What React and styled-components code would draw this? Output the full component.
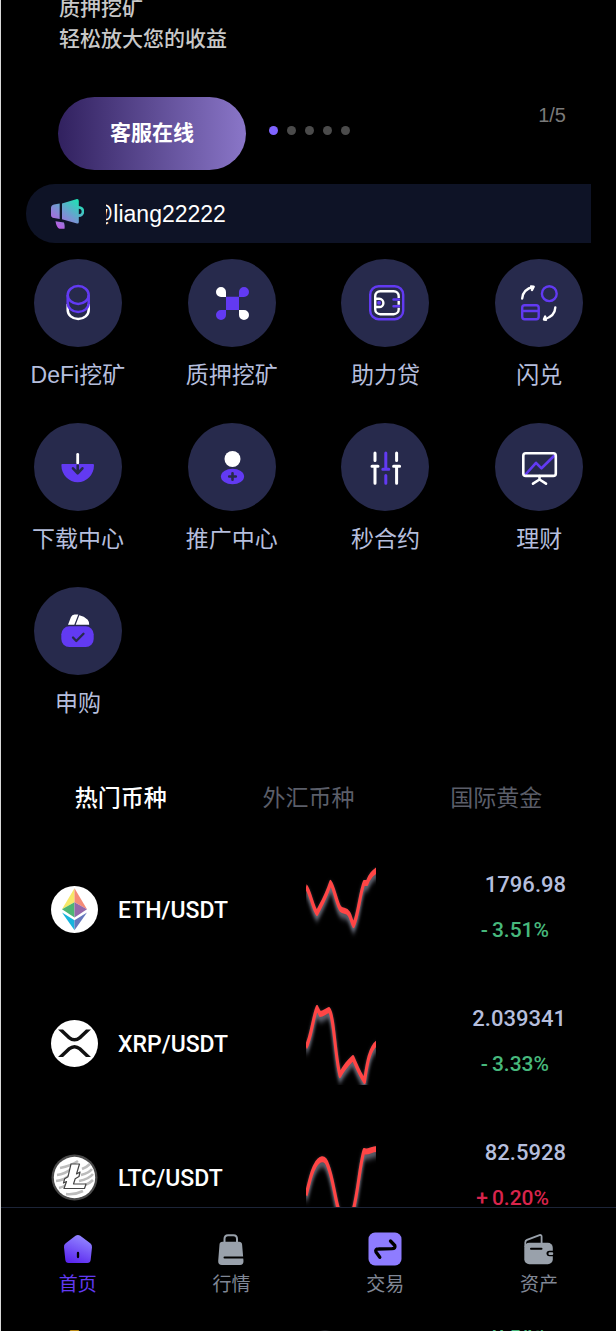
import React, { useState } from 'react';

import styled, { createGlobalStyle } from 'styled-components';


const TM = {
  bg: '#000000',
  edge: '#d9d9d9',
  bar: '#0e1326',
  disc: '#272a4c',
  accent: '#623af2',
  label: '#b5bedd',
  muted: '#5b5e69',
  nav: '#808795',
  navIcon: '#99a1ab',
  navLine: '#1c2438',
  up: '#d9244c',
  down: '#47b87c',
};

const SANS = '"Liberation Sans", "Noto Sans CJK SC", sans-serif';
const DIGITS = 'Roboto, "Noto Sans CJK SC", sans-serif';

const GlobalStyle = createGlobalStyle`
  * { box-sizing: border-box; }
  html, body { margin: 0; background: ${TM.bg}; }
  body { font-family: ${SANS}; color: #fff; overflow-x: hidden; }
  button { border: 0; padding: 0; background: none; font-family: inherit; cursor: pointer; }
  a { color: inherit; text-decoration: none; }
  svg { display: block; }
  ul { list-style: none; margin: 0; padding: 0; }
`;


///////////////////////////////////////////////////////////////////////////////////////////////////
// Page

const Page = styled.div`
  border-left: 1px solid ${TM.edge};
  height: 100vh;
  overflow: hidden;
`;

///////////////////////////////////////////////////////////////////////////////////////////////////
// Banner

const BannerText = styled.div`
  height: 54px;
  padding-left: 58px;
  display: flex;
  flex-direction: column;
  justify-content: flex-end;
  overflow: hidden;
  font-size: 21px;
  line-height: 31px;
  font-weight: 500;
  color: #c8c8c8;

  p { margin: 0; flex: none; }
`;

const BannerFoot = styled.div`
  display: flex;
  align-items: center;
  margin-top: 43px;
  padding: 0 50px 0 57px;
`;

const ServiceButton = styled.button`
  width: 188px;
  height: 73px;
  padding-bottom: 6px;
  border-radius: 37px;
  background: linear-gradient(90deg, #31215f, #8a76c8);
  color: #fff;
  font-size: 21px;
  font-weight: 700;
`;

const Dots = styled.div`
  display: flex;
  gap: 9px;
  margin-left: 23px;
  padding-bottom: 7px;
`;

const Dot = styled.button`
  width: 9px;
  height: 9px;
  border-radius: 50%;
  background: ${({ $on }) => $on ? '#7f63ff' : '#4b4b4b'};
`;

const Counter = styled.span`
  margin-left: auto;
  padding-bottom: 37px;
  font-size: 20px;
  line-height: 24px;
  color: #7a7a7a;
`;

///////////////////////////////////////////////////////////////////////////////////////////////////
// Notice

const NoticeBar = styled.div`
  display: flex;
  align-items: center;
  height: 59px;
  margin: 14px 25px 0;
  background: ${TM.bar};
  border-radius: 29px 0 0 29px;
  padding-left: 24px;
`;

const NoticeWindow = styled.div`
  flex: 1;
  margin-left: 22px;
  overflow: hidden;
  white-space: nowrap;
  font-size: 23px;
  line-height: 30px;
`;

const NoticeText = styled.span`
  display: inline-block;
  margin-left: -16px;
`;

///////////////////////////////////////////////////////////////////////////////////////////////////
// Services

const ServiceGrid = styled.div`
  display: grid;
  grid-template-columns: repeat(4, 1fr);
  row-gap: 34px;
  margin-top: 16px;
`;

const ServiceItem = styled.a`
  display: flex;
  flex-direction: column;
  align-items: center;
  gap: 14px;
  font-size: 23px;
  line-height: 28px;
  color: ${TM.label};
`;

const Disc = styled.span`
  width: 88px;
  height: 88px;
  border-radius: 50%;
  background: ${TM.disc};
`;

///////////////////////////////////////////////////////////////////////////////////////////////////
// Market

const Tabs = styled.div`
  display: flex;
  margin: 66px 26px 29px;
`;

const Tab = styled.button`
  flex: 1;
  font-size: 23px;
  line-height: 30px;
  font-weight: ${({ $on }) => $on ? 500 : 400};
  color: ${({ $on }) => $on ? '#fff' : TM.muted};
`;

const CoinRow = styled.a`
  display: grid;
  grid-template-columns: 1fr 70px 190px;
  align-items: center;
  height: 134px;
  padding: 0 50px;
  font-family: ${DIGITS};
  font-size: 22px;
  line-height: 30px;
  font-weight: 500;
`;

const Pair = styled.div`
  display: flex;
  align-items: center;
  gap: 20px;
  font-size: 23px;

  span { padding-top: 3px; }
`;

const Quote = styled.div`
  display: flex;
  flex-direction: column;
  align-items: flex-end;
  gap: 15px;
  padding-bottom: 4px;
  color: ${TM.label};
`;

const Price = styled.span`
  height: 30px;
`;

const Change = styled.span`
  display: flex;
  gap: 4px;
  margin-right: 17px;
  font-size: 21px;
  color: ${({ $up }) => $up ? TM.up : TM.down};
`;

const Spark = styled.svg`
  overflow: hidden;

  path {
    fill: none;
    stroke: #ff4545;
    stroke-width: 6;
    stroke-linejoin: round;
    filter: drop-shadow(0 4px 3px #858a9c);
  }
`;

///////////////////////////////////////////////////////////////////////////////////////////////////
// Bottom navigation, floats over the list

const NavBar = styled.nav`
  position: fixed;
  left: 1px;
  right: 0;
  bottom: 1px;
  height: 123px;
  display: grid;
  grid-template-columns: repeat(4, 1fr);
  background: ${TM.bg};
  border-top: 1px solid ${TM.navLine};
`;

const NavItem = styled.a`
  display: flex;
  flex-direction: column;
  align-items: center;
  gap: 6px;
  padding-top: 24px;
  font-size: 19px;
  line-height: 26px;
  color: ${({ $on }) => $on ? TM.accent : TM.nav};
`;


///////////////////////////////////////////////////////////////////////////////////////////////////
// Icons

const Megaphone = () => (
  <svg width="34" height="32" viewBox="0 0 34 32">
    <defs>
      <linearGradient id="horn" x1="1" y1="0" x2="0.1" y2="1">
        <stop offset="0.1" stopColor="#1be6b4" />
        <stop offset="0.5" stopColor="#6c9fd0" />
        <stop offset="1" stopColor="#c750e6" />
      </linearGradient>
    </defs>
    <g fill="url(#horn)">
      <path d="M1 10Q1 7 4 6.5L9.7 5.5V21L4 20Q1 19.500 1 17ZM12 5.400L27 1.100Q28.800 1 28.800 3V24Q28.800 26 27 25.500L12 21.300ZM5.500 23.300L14 24.500Q15 28 14.500 30.700H9.500Q6.500 30 5.500 23.300ZM28.800 8A5.200 5.200 0 0 1 28.800 19V16.300A2.600 2.600 0 0 0 28.800 10.700Z" />
    </g>
  </svg>
);

const P = TM.accent;
const W = '#fff';
const D = TM.disc;

const discIcons = {
  coins: (
    <g strokeWidth="2.5">
      <path stroke={W} d="M33.700 45V51A10.500 9 0 0 0 54.700 51V45" />
      <path stroke={P} d="M33.700 36V44A10.500 9 0 0 0 54.700 44V36" />
      <ellipse stroke={P} cx="44.200" cy="36" rx="10.500" ry="8.900" />
    </g>
  ),
  pledge: (
    <g>
      <path fill={P} d="M38 37.700H51V51H38ZM51 38V33A5 5 0 1 1 56 38ZM38 51V56A5 5 0 1 1 33 51Z" />
      <path fill={W} d="M38 38H33A5 5 0 1 1 38 33ZM51 51H56A5 5 0 1 1 51 56Z" />
    </g>
  ),
  loan: (
    <g strokeWidth="2.4">
      <rect stroke={P} x="29.200" y="27.200" width="33" height="33" rx="8.500" />
      <rect stroke={W} x="34.200" y="32.200" width="23.500" height="23" rx="5" />
      <path stroke={W} d="M34.500 39.800H38.300A4.100 4.100 0 0 1 38.300 48H34.500" />
      <circle fill={P} cx="38" cy="43.800" r="2" />
      <path stroke={D} strokeWidth="3" d="M56 40.500H60M56 47.200H60" />
      <path stroke={P} strokeLinecap="round" d="M52.500 40.500H58M52.500 47.200H58" />
    </g>
  ),
  swap: (
    <g strokeWidth="2.4" strokeLinecap="round" strokeLinejoin="round">
      <circle stroke={P} cx="54.300" cy="34.700" r="7.400" />
      <rect stroke={P} x="27.200" y="46.300" width="16.500" height="14" rx="2.500" />
      <path stroke={P} d="M27.500 52H43.500" />
      <path stroke={W} d="M27.200 39.500Q28 30 38.500 28L37 31M36 27.500L38.700 27.800" />
      <path stroke={W} d="M60.300 48.500Q60 57.500 49 60.300L50.200 57.500M49 60.500L51 60.800" />
    </g>
  ),
  download: (
    <g>
      <path fill={P} d="M28.300 41H59Q60 41 60 42.300A16.300 17 0 0 1 27.400 42.300Q27.300 41 28.300 41Z" />
      <path stroke={W} strokeWidth="2.800" strokeLinecap="round" d="M43.700 31.500V40" />
      <path stroke={D} strokeWidth="2.600" strokeLinecap="round" strokeLinejoin="round" d="M43.700 42.500V50M39 45.300L43.700 50.300L48.400 45.300" />
    </g>
  ),
  invite: (
    <g>
      <circle fill={W} cx="44.500" cy="36" r="8" />
      <ellipse fill={P} cx="44.500" cy="53.500" rx="11.600" ry="7.700" />
      <path stroke={D} strokeWidth="2.600" strokeLinecap="round" d="M41.200 53.500H47.800M44.500 50.200V56.800" />
    </g>
  ),
  sliders: (
    <g strokeWidth="3" strokeLinecap="round">
      <path stroke={W} d="M34 30V37.500M34 43.300V60.300M31 43.300H37M55.600 30V37.500M55.600 43.300V60.300M52.600 43.300H58.600" />
      <path stroke={P} d="M44.800 30V46.300M41.800 46.300H47.800M44.800 52.500V60.300" />
    </g>
  ),
  board: (
    <g strokeWidth="2.600" strokeLinecap="round" strokeLinejoin="round">
      <path stroke={P} d="M30.500 51.500L41 39.800L46.500 45.300L59.500 32.500" />
      <rect stroke={W} x="28.300" y="30.300" width="32.500" height="22.600" rx="2.500" />
      <path stroke={W} d="M44.500 53V56M38 60.700L44.500 56.500L51 60.700" />
    </g>
  ),
  subscribe: (
    <g>
      <rect fill={P} x="27.300" y="39.300" width="32.400" height="20.700" rx="8" />
      <path fill={W} d="M34 37.700L37 30Q38 27.500 40.500 27.500H44.300L40.300 37.700ZM41.700 37.700L45.300 28.300Q50 29 53.700 32.700Q55.500 35 55.200 37.700Z" />
      <path stroke={D} strokeWidth="2.300" strokeLinecap="round" strokeLinejoin="round" d="M39 50.500L42.300 54L49.500 46.700" />
    </g>
  ),
};

const DiscIcon = ({ name }) => (
  <Disc>
    <svg width="88" height="88" viewBox="0 0 88 88" fill="none" aria-hidden="true">{discIcons[name]}</svg>
  </Disc>
);

const coinLogos = {
  eth: (
    <g>
      <circle cx="23.500" cy="23.500" r="23.500" fill="#fff" />
      <path fill="#f6e868" d="M23.500 2.300V16.300L11 23.300Z" />
      <path fill="#f58b77" d="M23.500 2.300V16.300L36 23.300Z" />
      <path fill="#4db573" d="M23.500 16.300V31.500L11 23.300Z" />
      <path fill="#9567a9" d="M23.500 16.300V31.500L36 23.300Z" />
      <path fill="#17b4dd" d="M11 26.500L23.500 34.300V44.300Z" />
      <path fill="#6477bc" d="M36 26.500L23.500 34.300V44.300Z" />
    </g>
  ),
  xrp: (
    <g>
      <circle cx="23.500" cy="23.500" r="23.500" fill="#fff" />
      <path fill="#111" d="M7 9.500H12L19.500 16.500Q23.500 19.500 27.500 16.500L35 9.500H40L30 18.900Q23.500 24.300 17 18.900ZM7 37H12L19.500 30Q23.500 27 27.500 30L35 37H40L30 27.600Q23.500 22.200 17 27.600Z" />
      <path stroke="#fff" strokeWidth="2" d="M19 23.250H28" />
    </g>
  ),
  ltc: (
    <g>
      <circle cx="23.500" cy="23.500" r="23" fill="#4a4a4a" />
      <circle cx="23.500" cy="23.500" r="20.700" fill="#fff" />
      <path fill="none" stroke="#bcbcbc" strokeWidth="2.600" d="M9 14Q20 12 27 7M6 21Q14 20 20 15M5 27Q14 26 19 21M31 15Q36 13 39 10M30 21Q38 19 41 15M28 27Q38 25 42 20M34 31Q39 29 42 26M8 34Q12 33 15 31M15 40Q24 41 32 37" />
      <path fill="#fff" stroke="#444" strokeWidth="1.200" strokeLinejoin="round" d="M20 10H28.500L25.500 20L29 18L28 22.500L24.200 24.700L22.500 30H35L33.500 34.500H13L15.500 27.500L12.500 29L13.700 24.700L17 22.700Z" />
    </g>
  ),
  bnb: (
    <g>
      <path fill="#b98a16" d="M23.500 2L32 10.500L28.500 14L23.500 9L18.500 14L15 10.500ZM23.500 47L33 37.500L28.500 33L23.500 38L18.500 33L14 37.500ZM23.500 18.500L28.500 23.500L23.500 28.500L18.500 23.500ZM7 20L10.500 23.500L7 27L3.500 23.500ZM40 20L43.500 23.500L40 27L36.500 23.500Z" />
    </g>
  ),
};

const CoinLogo = ({ name }) => (
  <svg width="47" height="47" viewBox="0 0 47 47" aria-hidden="true">{coinLogos[name]}</svg>
);

const navIcons = {
  home: (
    <g>
      <defs>
        <linearGradient id="house" x1="0.7" y1="0" x2="0.3" y2="1">
          <stop offset="0.1" stopColor="#8f80ff" />
          <stop offset="1" stopColor="#5a26ee" />
        </linearGradient>
      </defs>
      <path fill="url(#house)" d="M14.500 3.800Q16.900 2.200 19.300 3.800L29.300 11.300Q31.200 13 31 15.300L29.700 27.700Q29.300 31 26.300 31H7.700Q4.700 31 4.300 27.700L3 15.300Q2.600 13 4.700 11.300Z" />
      <path stroke="#000" strokeWidth="2.300" strokeLinecap="round" d="M17 21V25" />
    </g>
  ),
  bag: (
    <g>
      <path stroke={TM.navIcon} strokeWidth="2" d="M9.500 11V7Q9.500 3.200 13 3.200H18.500Q22 3.200 22 7V11" />
      <path fill={TM.navIcon} d="M7.500 9.700H24Q26.800 9.700 27.100 12.500L28.500 29Q28.500 33 25 33H7Q3 33 3.200 29L4.500 12.500Q4.700 9.700 7.500 9.700Z" />
      <path stroke="#000" strokeWidth="2" strokeLinecap="round" d="M9.500 25.500H30" />
    </g>
  ),
  trade: (
    <g>
      <rect x="0.500" y="0.500" width="33" height="33" rx="6.500" fill="#8e7cff" />
      <path stroke="#000" strokeWidth="3.300" strokeLinecap="round" strokeLinejoin="round" d="M22.500 9L26.800 13.500Q27.800 16.500 24 16.700L10.500 17Q6.800 17 8 20L11.800 25.300" />
    </g>
  ),
  wallet: (
    <g>
      <path stroke={TM.navIcon} strokeWidth="1.800" d="M3.300 15V10.500Q3.300 8.500 5 7.800L17.500 3.100Q19.500 2.600 19.600 4.500V11" />
      <rect x="2.300" y="10.700" width="28.500" height="21.500" rx="5" fill={TM.navIcon} />
      <path stroke="#000" strokeWidth="2" strokeLinecap="round" d="M9 16.700H19.500" />
      <path fill="#000" d="M34 18.800H27.500Q24.500 19 24.500 21.500T27.500 24.300H34Z" />
      <rect x="26.500" y="20.200" width="4.700" height="2.700" rx="1" fill={TM.navIcon} />
    </g>
  ),
};


///////////////////////////////////////////////////////////////////////////////////////////////////
// Data

const services = [
  ['coins', 'DeFi挖矿'],
  ['pledge', '质押挖矿'],
  ['loan', '助力贷'],
  ['swap', '闪兑'],
  ['download', '下载中心'],
  ['invite', '推广中心'],
  ['sliders', '秒合约'],
  ['board', '理财'],
  ['subscribe', '申购'],
];

const tabs = ['热门币种', '外汇币种', '国际黄金'];

// Lines are drawn in a 140x84 box and squeezed to half its width
const coins = [
  { logo: 'eth', pair: 'ETH/USDT', price: '1796.98', change: '3.51%', up: false,
    line: 'M0 20C8 24 14 42 22 46C30 38 40 30 49 16C56 20 62 38 69 42C76 45 80 42 86 47C90 50 91 55 95 58C104 50 108 26 116 16L122 16C128 8 134 6 142 3' },
  { logo: 'xrp', pair: 'XRP/USDT', price: '2.039341', change: '3.33%', up: false,
    line: 'M0 46C10 38 14 16 22 7L28 13C34 13 40 10 46 9C56 14 58 56 68 74C76 66 84 62 94 57C102 66 108 74 117 80C122 64 126 48 142 42' },
  { logo: 'ltc', pair: 'LTC/USDT', price: '82.5928', change: '0.20%', up: true,
    line: 'M0 60C6 50 10 37 18 31C26 23 38 21 44 31C54 43 58 64 66 76C72 92 86 92 94 76C104 58 108 28 116 16C124 18 130 14 142 14' },
  { logo: 'bnb', pair: 'BNB/USDT', price: '', change: '0.54%', up: false,
    line: 'M0 20C14 30 26 50 38 52C50 50 70 30 90 24C110 20 130 20 142 14' },
];

const navs = [
  ['home', '首页'],
  ['bag', '行情'],
  ['trade', '交易'],
  ['wallet', '资产'],
];


const App = () => {
  const [slide, setSlide] = useState(0);
  const [tab, setTab] = useState(0);
  const [nav, setNav] = useState(0);

  return (
    <Page>
      <GlobalStyle />

      <BannerText>
        <p>质押挖矿</p>
        <p>轻松放大您的收益</p>
      </BannerText>
      <BannerFoot>
        <ServiceButton>客服在线</ServiceButton>
        <Dots>
          {[0, 1, 2, 3, 4].map((i) => (
            <Dot key={i} $on={i === slide} aria-label={`${i + 1}`} onClick={() => setSlide(i)} />
          ))}
        </Dots>
        <Counter>{slide + 1}/5</Counter>
      </BannerFoot>

      <NoticeBar>
        <Megaphone />
        <NoticeWindow><NoticeText>@liang22222</NoticeText></NoticeWindow>
      </NoticeBar>

      <ServiceGrid>
        {services.map(([icon, text]) => (
          <ServiceItem key={icon} href="#">
            <DiscIcon name={icon} />
            {text}
          </ServiceItem>
        ))}
      </ServiceGrid>

      <Tabs>
        {tabs.map((text, i) => (
          <Tab key={text} $on={i === tab} onClick={() => setTab(i)}>{text}</Tab>
        ))}
      </Tabs>

      <ul>
        {coins.map(({ logo, pair, price, change, up, line }) => (
          <li key={pair}>
            <CoinRow href="#">
              <Pair><CoinLogo name={logo} /><span>{pair}</span></Pair>
              <Spark width="70" height="84" viewBox="0 0 140 84" preserveAspectRatio="none">
                <path d={line} />
              </Spark>
              <Quote>
                <Price>{price}</Price>
                <Change $up={up}><span>{up ? '+' : '-'}</span><span>{change}</span></Change>
              </Quote>
            </CoinRow>
          </li>
        ))}
      </ul>

      <NavBar>
        {navs.map(([icon, text], i) => (
          <NavItem key={icon} href="#" $on={i === nav} onClick={() => setNav(i)}>
            <svg width="34" height="34" viewBox="0 0 34 34" fill="none" aria-hidden="true">{navIcons[icon]}</svg>
            {text}
          </NavItem>
        ))}
      </NavBar>
    </Page>
  );
}

export default App;
